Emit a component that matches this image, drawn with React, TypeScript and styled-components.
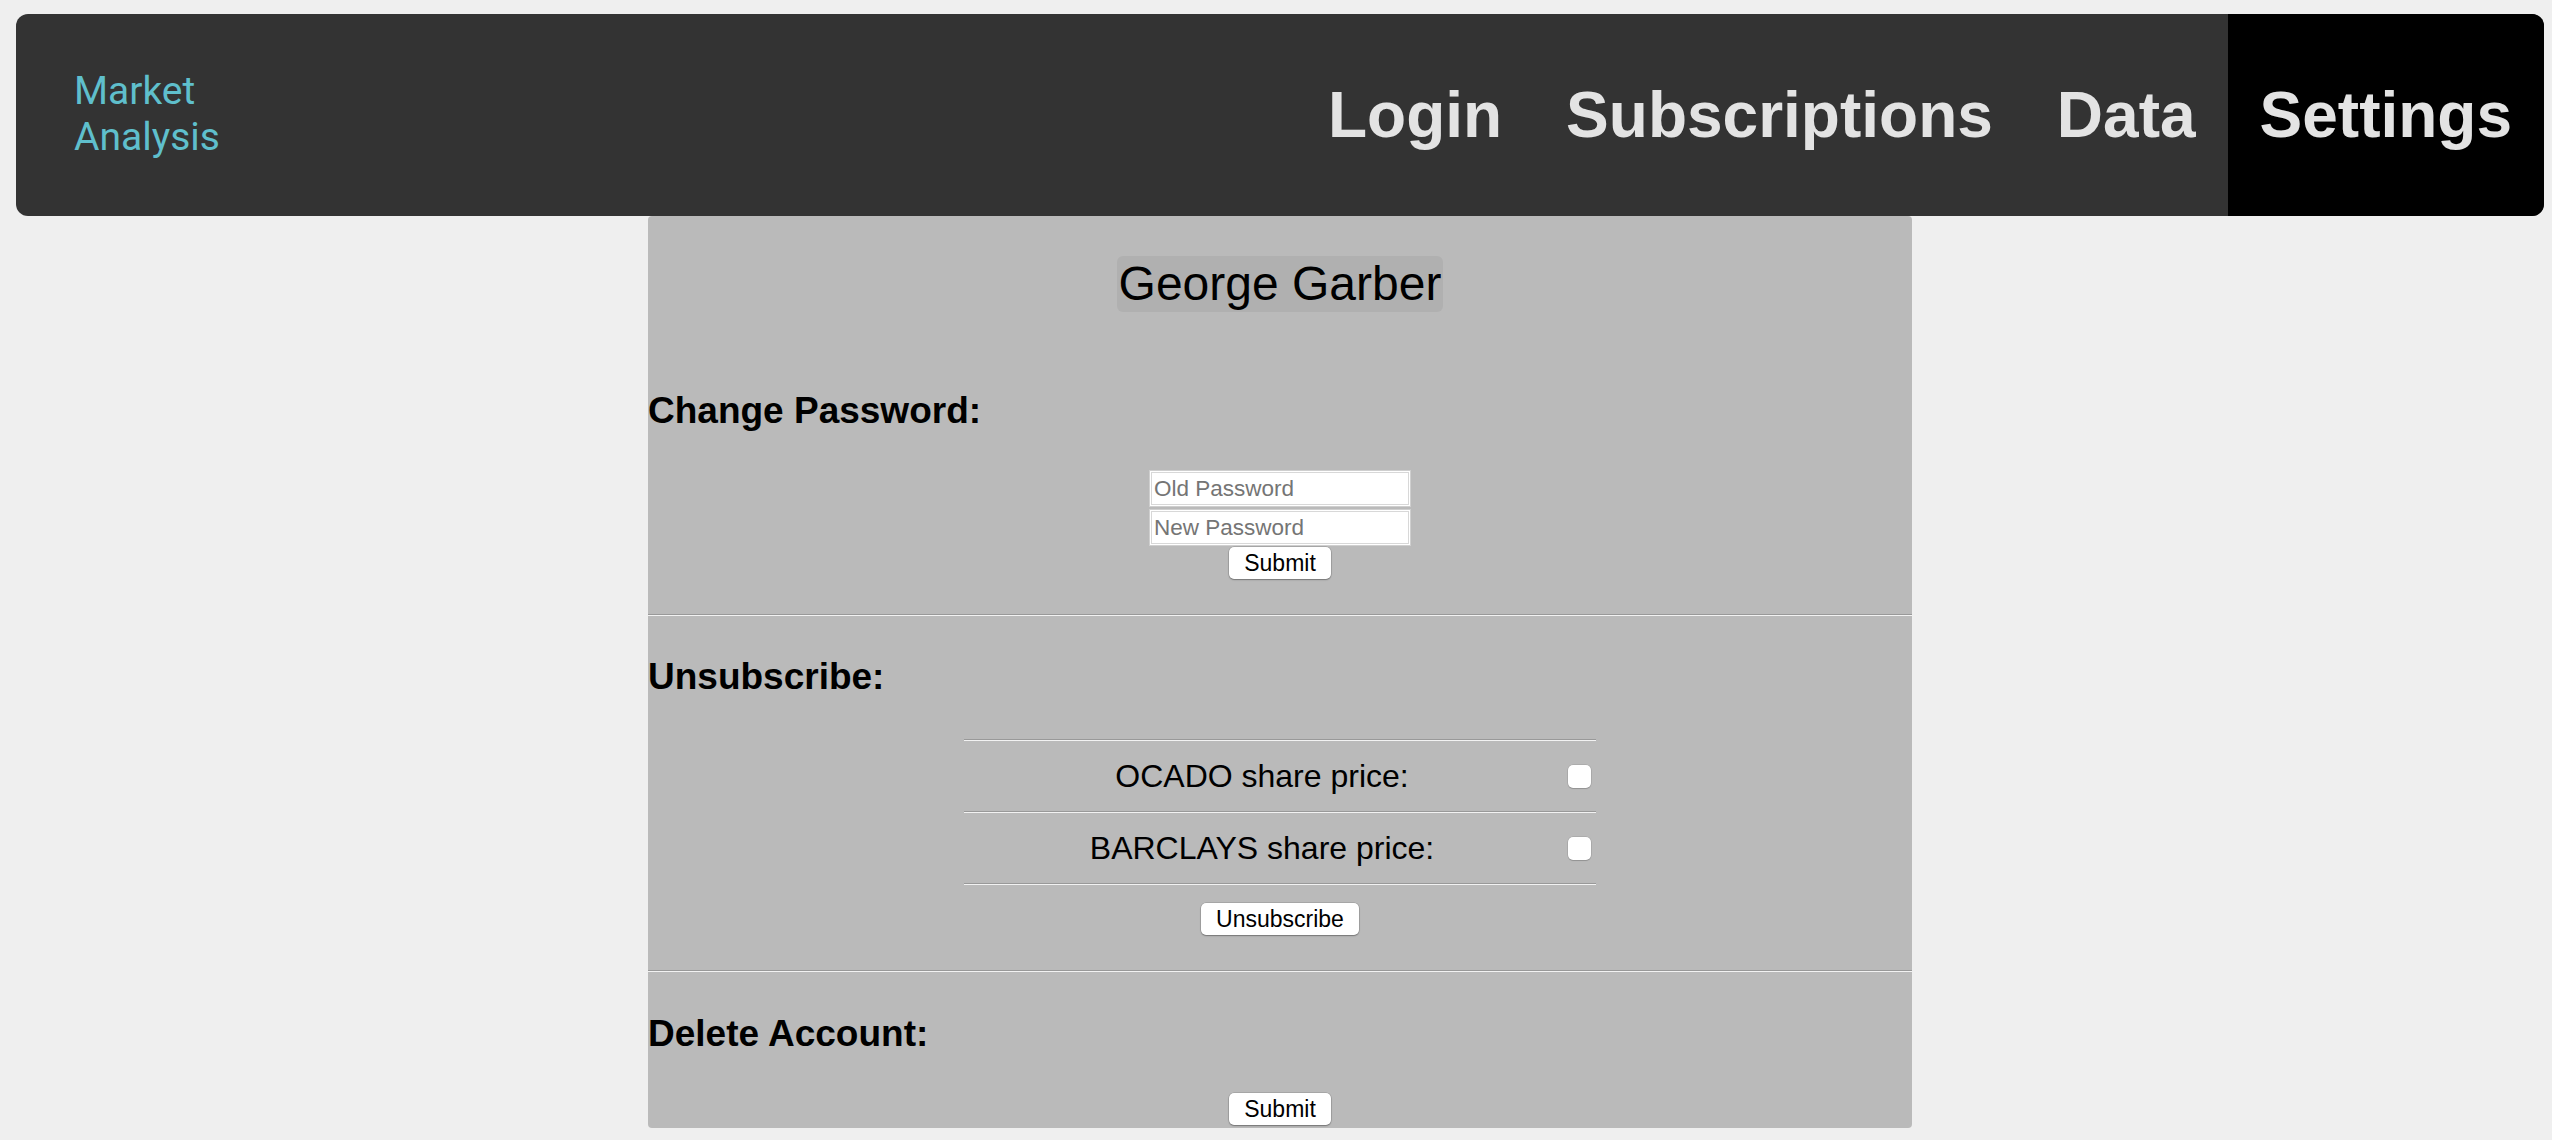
import React from 'react';
import styled, { createGlobalStyle } from 'styled-components';

const GlobalStyle = createGlobalStyle`
    body {
        margin: 0;
        background-color: #efefef;
        font-family: 'Liberation Sans', Arial, sans-serif;
    }
`;

const navItems = ['Login', 'Subscriptions', 'Data', 'Settings'];

const subscriptions = ['OCADO', 'BARCLAYS'];

export default function App() {
    return (
        <Page>
            <GlobalStyle />
            <NavBar>
                <Logo>
                    Market
                    <br />
                    Analysis
                </Logo>
                <NavLinks>
                    {navItems.map((item) => (
                        <NavLink key={item} active={item === 'Settings'}>
                            {item}
                        </NavLink>
                    ))}
                </NavLinks>
            </NavBar>
            <Panel>
                <Section padBottom={35}>
                    <NameBox>George Garber</NameBox>
                    <SectionTitle top={80}>Change Password:</SectionTitle>
                    <PasswordForm>
                        <TextInput type="password" placeholder="Old Password" />
                        <TextInput type="password" placeholder="New Password" />
                        <Button top={-1}>Submit</Button>
                    </PasswordForm>
                </Section>
                <Divider />
                <Section padBottom={35}>
                    <SectionTitle top={42}>Unsubscribe:</SectionTitle>
                    <SubList>
                        <Divider />
                        {subscriptions.map((name) => (
                            <React.Fragment key={name}>
                                <SubRow>
                                    <SubLabel>{name} share price:</SubLabel>
                                    <Checkbox type="checkbox" />
                                </SubRow>
                                <Divider />
                            </React.Fragment>
                        ))}
                    </SubList>
                    <Button top={18}>Unsubscribe</Button>
                </Section>
                <Divider />
                <Section padBottom={3}>
                    <SectionTitle top={43}>Delete Account:</SectionTitle>
                    <Button top={41}>Submit</Button>
                </Section>
            </Panel>
        </Page>
    );
}

const Page = styled.div`
    padding: 14px 8px 0 16px;
`;

const NavBar = styled.div`
    display: flex;
    flex-direction: row;
    align-items: stretch;
    height: 202px;
    background-color: #333333;
    border-radius: 12px;
    overflow: hidden;
`;

const Logo = styled.div`
    align-self: center;
    margin-right: auto;
    padding-left: 58px;
    padding-bottom: 2px;
    font-family: 'Roboto', sans-serif;
    font-size: 39px;
    line-height: 46px;
    color: #5fbfcc;
`;

const NavLinks = styled.div`
    display: flex;
    flex-direction: row;
`;

const NavLink = styled.div<{ active?: boolean }>`
    display: flex;
    align-items: center;
    padding: 0 32px;
    font-size: 64px;
    font-weight: bold;
    color: #e3e3e3;
    background-color: ${(props) => (props.active ? '#000000' : 'transparent')};
`;

const Panel = styled.div`
    width: 50%;
    margin: 0 auto;
    background-color: #bababa;
    border-radius: 4px;
`;

const Section = styled.div<{ padBottom: number }>`
    display: flex;
    flex-direction: column;
    align-items: center;
    padding-bottom: ${(props) => props.padBottom}px;
`;

const NameBox = styled.div`
    margin-top: 40px;
    height: 56px;
    padding: 0 2px;
    font-size: 48px;
    line-height: 56px;
    background-color: #b0b0b0;
    border-radius: 6px;
`;

const SectionTitle = styled.h2<{ top: number }>`
    align-self: stretch;
    margin: ${(props) => props.top}px 0 0 0;
    font-size: 37px;
    line-height: 37px;
    font-weight: bold;
    color: #000;
`;

const PasswordForm = styled.div`
    display: flex;
    flex-direction: column;
    align-items: center;
    gap: 2px;
    margin-top: 41px;
`;

const TextInput = styled.input`
    box-sizing: border-box;
    width: 262px;
    height: 37px;
    padding: 0 4px;
    font-family: 'Liberation Sans', Arial, sans-serif;
    font-size: 22.5px;
    background: #fff;
    border: 1px solid #cfcfcf;
    box-shadow: inset 0 0 0 1px #fff, inset 0 0 0 2px #d8d8d8;
    outline: none;

    &::placeholder {
        color: #757575;
    }
`;

const Button = styled.button<{ top?: number }>`
    height: 32px;
    margin-top: ${(props) => props.top || 0}px;
    padding: 0 15px;
    font-family: 'Liberation Sans', Arial, sans-serif;
    font-size: 23px;
    color: #000;
    background-color: #fff;
    border: none;
    border-radius: 5px;
    box-shadow: 0 0 0 0.5px rgba(0, 0, 0, 0.2), 0 1px 1.5px rgba(0, 0, 0, 0.3);
`;

const Divider = styled.hr`
    margin: 0;
    height: 0;
    border: none;
    border-top: 1px solid #999999;
    border-bottom: 1px solid #f2f2f2;
`;

const SubList = styled.div`
    width: 50%;
    margin-top: 44px;
`;

const SubRow = styled.div`
    display: flex;
    flex-direction: row;
    align-items: center;
    height: 70px;
`;

const SubLabel = styled.div`
    flex: 1;
    padding-right: 8px;
    text-align: center;
    font-size: 32px;
    color: #000;
`;

const Checkbox = styled.input`
    appearance: none;
    width: 23px;
    height: 23px;
    margin: 0 5px 0 0;
    background: #fff;
    border-radius: 5px;
    box-shadow: 0 0 0 0.5px rgba(0, 0, 0, 0.15), 0 1px 1px rgba(0, 0, 0, 0.15);
`;
